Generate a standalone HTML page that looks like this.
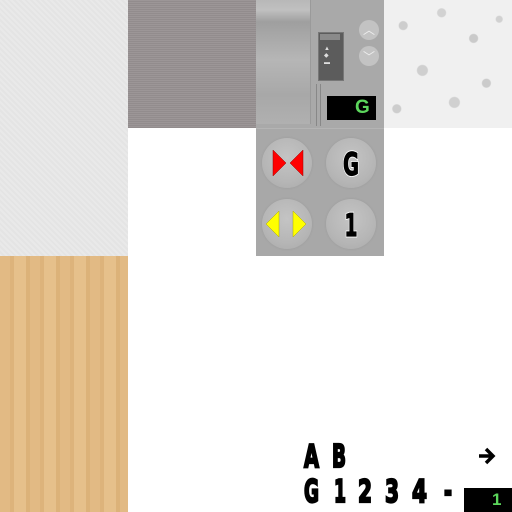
<!DOCTYPE html>
<html><head><meta charset="utf-8"><style>
html,body{margin:0;padding:0;width:512px;height:512px;background:#fff;overflow:hidden;position:relative;font-family:"Liberation Sans",sans-serif}
.a{position:absolute}
.btn{position:absolute;width:50px;height:50px;border-radius:50%;background:radial-gradient(circle at 50% 40%,#c4c4c4,#b6b6b6 60%,#a9a9a9);box-shadow:0 0 2px #999}
svg text{font-family:"DejaVu Sans","Liberation Sans",sans-serif;font-weight:700}
</style></head><body>
<div class="a" style="left:0;top:0;width:128px;height:256px;background:repeating-linear-gradient(45deg,#e9e9e9 0 2px,#e4e4e4 2px 4px)"></div>
<div class="a" style="left:128px;top:0;width:128px;height:128px;background:repeating-linear-gradient(0deg,#928c8d 0 1px,#9c9697 1px 2px)"></div>
<div class="a" style="left:384px;top:0;width:128px;height:128px;background:
radial-gradient(circle at 15% 20%,#cdcdcd 4px,transparent 5px),
radial-gradient(circle at 45% 10%,#d2d2d2 4px,transparent 5px),
radial-gradient(circle at 70% 30%,#cacaca 4px,transparent 5px),
radial-gradient(circle at 30% 55%,#cfcfcf 5px,transparent 6px),
radial-gradient(circle at 80% 65%,#cbcbcb 4px,transparent 5px),
radial-gradient(circle at 55% 80%,#d0d0d0 5px,transparent 6px),
radial-gradient(circle at 10% 85%,#cdcdcd 4px,transparent 5px),
radial-gradient(circle at 90% 15%,#d1d1d1 3px,transparent 4px),
#f0f0f0"></div>
<div class="a" style="left:0;top:256px;width:128px;height:256px;background:repeating-linear-gradient(90deg,#e2ba84 0 10px,#ddb37b 10px 14px,#e6c08b 14px 26px,#dcb279 26px 30px),#e0b780"></div>
<div class="a" style="left:256px;top:0;width:128px;height:128px;background:#a9a9a9"></div>
<div class="a" style="left:256px;top:0;width:54px;height:124px;background:linear-gradient(180deg,#b8b8b8 0,#c0c0c0 10px,#9f9f9f 22px,#a4a4a4 30px,#b6b6b6 60px,#a8a8a8 95px,#b0b0b0 124px)"></div>
<div class="a" style="left:310px;top:0;width:1px;height:124px;background:#9a9a9a"></div>
<div class="a" style="left:318px;top:32px;width:24px;height:47px;background:#5c5c5c;border:1px solid #777"></div>
<div class="a" style="left:320px;top:34px;width:20px;height:6px;background:#8a8a8a"></div>
<div class="a" style="left:324px;top:46px;width:10px;height:20px;color:#ddd;font-size:6px;line-height:7px">▲<br>◆<br>▬</div>
<div class="a" style="left:316px;top:84px;width:1px;height:42px;background:#888"></div>
<div class="a" style="left:320px;top:84px;width:1px;height:42px;background:#888"></div>
<div class="a" style="left:359px;top:20px;width:20px;height:20px;border-radius:50%;background:#c3c3c3;color:#eee;font-size:12px;text-align:center;line-height:20px">︿</div>
<div class="a" style="left:359px;top:46px;width:20px;height:20px;border-radius:50%;background:#c3c3c3;color:#eee;font-size:12px;text-align:center;line-height:22px">﹀</div>
<div class="a" style="left:327px;top:96px;width:49px;height:24px;background:#000"></div>
<div class="a" style="left:355px;top:97px;color:#5cd65c;font-size:19px;font-weight:bold">G</div>
<div class="a" style="left:256px;top:128px;width:128px;height:127px;background:#a8a8a8;border-top:1px solid #b4b4b4"></div>
<div class="btn" style="left:262px;top:138px"></div>
<div class="btn" style="left:326px;top:138px"></div>
<div class="btn" style="left:262px;top:199px"></div>
<div class="btn" style="left:326px;top:199px"></div>
<svg class="a" style="left:0;top:0" width="512" height="512">
<polygon points="273,150 286,163 273,176" fill="#f00" stroke="#900" stroke-width="0.5"/>
<polygon points="303,150 290,163 303,176" fill="#f00" stroke="#900" stroke-width="0.5"/>
<polygon points="279,211 266,224 279,237" fill="#ff0" stroke="#aa0" stroke-width="0.5"/>
<polygon points="293,211 306,224 293,237" fill="#ff0" stroke="#aa0" stroke-width="0.5"/>
<g fill="#000" font-size="31" text-anchor="middle">
<text x="351" y="175" textLength="16" lengthAdjust="spacingAndGlyphs" stroke="#fff" stroke-width="3" paint-order="stroke">G</text>
<text x="351" y="236" textLength="13" lengthAdjust="spacingAndGlyphs" stroke="#fff" stroke-width="3" paint-order="stroke">1</text>
<text x="351" y="175" textLength="16" lengthAdjust="spacingAndGlyphs" stroke="#000" stroke-width="1.2">G</text>
<text x="351" y="236" textLength="13" lengthAdjust="spacingAndGlyphs" stroke="#000" stroke-width="1.2">1</text>
</g>
<g fill="#000" stroke="#000" stroke-width="2.2" font-size="31">
<text x="304" y="467" textLength="15" lengthAdjust="spacingAndGlyphs">A</text>
<text x="332" y="467" textLength="14" lengthAdjust="spacingAndGlyphs">B</text>
<text x="304" y="502" textLength="15" lengthAdjust="spacingAndGlyphs">G</text>
<text x="334" y="502" textLength="12" lengthAdjust="spacingAndGlyphs">1</text>
<text x="358" y="502" textLength="14" lengthAdjust="spacingAndGlyphs">2</text>
<text x="385" y="502" textLength="14" lengthAdjust="spacingAndGlyphs">3</text>
<text x="412" y="502" textLength="15" lengthAdjust="spacingAndGlyphs">4</text>
<text x="444" y="502" textLength="8" lengthAdjust="spacingAndGlyphs">-</text>
</g>
<path d="M479 456 H492 M486 449 L493 456 L486 463" stroke="#000" stroke-width="3.5" fill="none"/>
</svg>
<div class="a" style="left:464px;top:488px;width:48px;height:24px;background:#000"></div>
<div class="a" style="left:492px;top:490px;color:#5cd65c;font-size:17px;font-weight:bold">1</div>
</body></html>
